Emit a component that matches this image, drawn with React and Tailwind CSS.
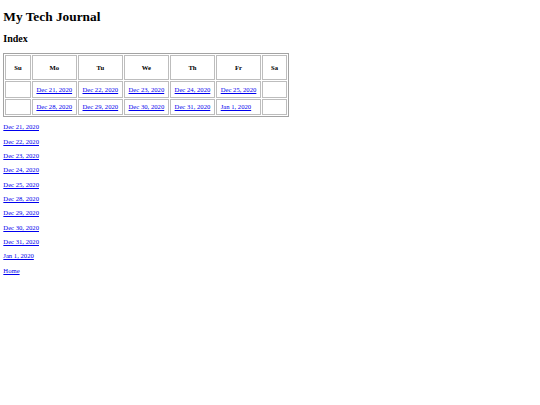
const WEEKS = [
  ['Dec 21, 2020', 'Dec 22, 2020', 'Dec 23, 2020', 'Dec 24, 2020', 'Dec 25, 2020'],
  ['Dec 28, 2020', 'Dec 29, 2020', 'Dec 30, 2020', 'Dec 31, 2020', 'Jan 1, 2020'],
]
const DAYS = ['Su', 'Mo', 'Tu', 'We', 'Th', 'Fr', 'Sa']

function DayLink({ children }) {
  return (
    <a href="#" className="text-[#0000ee] underline">
      {children}
    </a>
  )
}

export default function App() {
  const all = WEEKS.flat()
  return (
    <div className="min-h-screen bg-white px-[3.33px] pb-[4px] font-['Liberation_Serif',serif] leading-[normal] text-black">
      <h1 className="my-[8.93px] text-[13.33px] leading-[15.33px] font-bold">My Tech Journal</h1>
      <h2 className="my-[8.3px] text-[10px] leading-[11.5px] font-bold">Index</h2>

      <table className="border-separate border-spacing-[1px] border border-[#a3a3a3]">
        <thead>
          <tr>
            {DAYS.map((d) => (
              <th key={d} className="border border-[#bdbdbd] px-[8px] py-[7.8px] text-center text-[6.67px] leading-[7.67px] font-bold">
                {d}
              </th>
            ))}
          </tr>
        </thead>
        <tbody>
          {WEEKS.map((week, i) => (
            <tr key={i}>
              <td className="border border-[#bdbdbd] px-[3.7px] py-[3.3px] text-[6.67px] leading-[7.67px]"></td>
              {week.map((day) => (
                <td key={day} className="border border-[#bdbdbd] px-[3.7px] py-[3.3px] text-[6.67px] leading-[7.67px]">
                  <DayLink>{day}</DayLink>
                </td>
              ))}
              <td className="border border-[#bdbdbd] px-[3.7px] py-[3.3px] text-[6.67px] leading-[7.67px]"></td>
            </tr>
          ))}
        </tbody>
      </table>

      {all.map((day) => (
        <p key={day} className="my-[6.67px] text-[6.67px] leading-[7.67px]">
          <DayLink>{day}</DayLink>
        </p>
      ))}
      <p className="my-[6.67px] text-[6.67px] leading-[7.67px]">
        <DayLink>Home</DayLink>
      </p>
    </div>
  )
}
